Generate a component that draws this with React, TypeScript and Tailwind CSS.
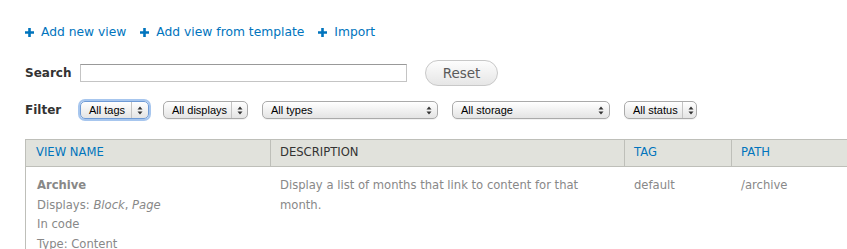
import React from 'react';

const font = { fontFamily: '"DejaVu Sans", Verdana, sans-serif' };

function Plus() {
  return (
    <svg width="9" height="9" viewBox="0 0 9 9" className="shrink-0">
      <path d="M3.2 0h2.6v3.2H9v2.6H5.8V9H3.2V5.8H0V3.2h3.2z" fill="#0074bd" />
    </svg>
  );
}

function Arrows() {
  return (
    <svg width="6" height="9" viewBox="0 0 6 9" className="shrink-0">
      <path d="M3 0.5L5.5 3.5H0.5z M3 8.5L0.5 5.5H5.5z" fill="#333" />
    </svg>
  );
}

interface SelectProps {
  label: string;
  width: string;
  focused?: boolean;
  divider?: boolean;
}

function FakeSelect({ label, width, focused, divider = true }: SelectProps) {
  return (
    <div
      className={`${width} h-[18px] flex items-center rounded-[5px] border bg-gradient-to-b from-white to-[#e4e4e4] ${
        focused
          ? 'border-[#6f9bd6] shadow-[0_0_0_2px_#a7c6ee]'
          : 'border-[#aaaaaa] shadow-[0_1px_0_rgba(0,0,0,0.05)]'
      }`}
    >
      <span
        className="flex-1 pl-[8px] pr-[4px] text-[11px] leading-none text-black whitespace-nowrap"
        style={{ fontFamily: '"Liberation Sans", Arial, sans-serif' }}
      >
        {label}
      </span>
      <span
        className={`h-full flex items-center px-[5px] ${divider ? 'border-l border-[#c4c4c4]' : ''}`}
      >
        <Arrows />
      </span>
    </div>
  );
}

export default function App() {
  return (
    <div className="w-[847px] h-[249px] overflow-hidden bg-white pl-[25px]" style={font}>
      {/* action links */}
      <div className="flex items-center gap-[14px] pt-[24px] h-[40px] text-[12.3px] text-[#0074bd]">
        <a className="flex items-center gap-[7px]"><Plus />Add new view</a>
        <a className="flex items-center gap-[7px]"><Plus />Add view from template</a>
        <a className="flex items-center gap-[7px]"><Plus />Import</a>
      </div>

      {/* search */}
      <div className="flex items-center mt-[20px] h-[26px]">
        <label className="w-[55px] text-[12px] font-bold text-[#333]">Search</label>
        <div className="w-[327px] h-[18px] border border-[#c4c4c4] border-t-[#999]" />
        <button className="ml-[18px] w-[73px] h-[26px] rounded-full border border-[#c8c8c8] bg-gradient-to-b from-[#fdfdfd] to-[#e6e6e6] text-[13.5px] text-[#5a5a5a]">
          Reset
        </button>
      </div>

      {/* filter */}
      <div className="flex items-center mt-[15px] h-[18px] gap-[14px]">
        <label className="w-[41px] text-[12px] font-bold text-[#333]">Filter</label>
        <FakeSelect label="All tags" width="w-[69px]" focused />
        <FakeSelect label="All displays" width="w-[85px]" />
        <FakeSelect label="All types" width="w-[176px]" divider={false} />
        <FakeSelect label="All storage" width="w-[158px]" divider={false} />
        <FakeSelect label="All status" width="w-[73px]" />
      </div>

      {/* table */}
      <div className="mt-[20px] w-[900px] text-[11.6px]">
        <div className="grid grid-cols-[244px_354px_107px_1fr] h-[28px] bg-[#e1e2dc] border border-[#bebfb9]">
          <div className="flex items-center pl-[10px] text-[#0074bd]">VIEW NAME</div>
          <div className="flex items-center pl-[9px] border-l border-[#bebfb9] text-[#333]">DESCRIPTION</div>
          <div className="flex items-center pl-[9px] border-l border-[#bebfb9] text-[#0074bd]">TAG</div>
          <div className="flex items-center pl-[9px] border-l border-[#bebfb9] text-[#0074bd]">PATH</div>
        </div>
        <div className="grid grid-cols-[244px_354px_107px_1fr] border-l border-[#bebfb9] pt-[9px] leading-[19.6px] text-[#888]">
          <div className="pl-[11px]">
            <div className="font-bold">Archive</div>
            <div>Displays: <em>Block</em>, <em>Page</em></div>
            <div>In code</div>
            <div>Type: Content</div>
          </div>
          <div className="pl-[10px] pr-[10px]">
            Display a list of months that link to content for that month.
          </div>
          <div className="pl-[10px]">default</div>
          <div className="pl-[10px]">/archive</div>
        </div>
      </div>
    </div>
  );
}
